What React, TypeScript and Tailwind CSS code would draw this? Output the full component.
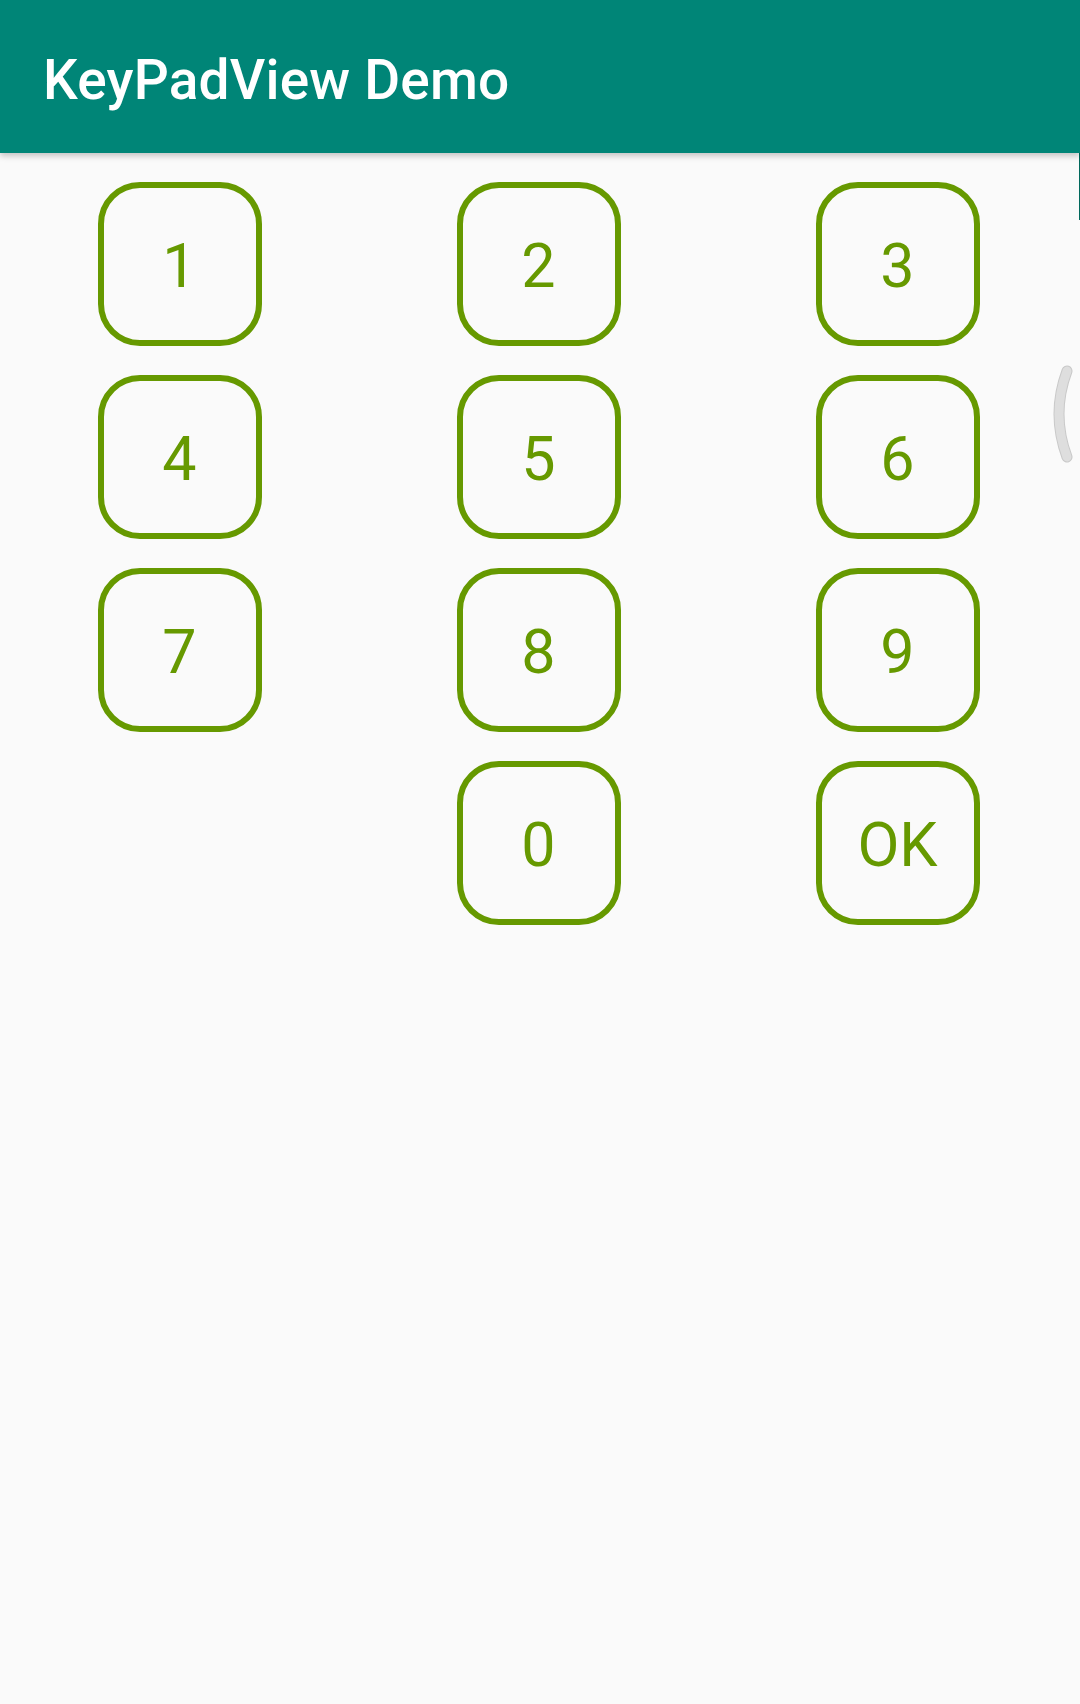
const keys = ["1", "2", "3", "4", "5", "6", "7", "8", "9", "", "0", "OK"]

function Key({ label }: { label: string }) {
    if (!label) return <div className="w-[164px] h-[164px]" />
    return (
        <div className="w-[164px] h-[164px] rounded-[42px] border-[6px] border-[#669900] flex items-center justify-center">
            <span className="text-[#669900] text-[61px] leading-none font-normal font-['Roboto'] pt-[4px]">{label}</span>
        </div>
    )
}

export default function App() {
    return (
        <div className="relative w-[1080px] h-[1704px] bg-[#fafafa] overflow-hidden font-['Roboto',sans-serif]">
            {/* toolbar */}
            <div className="relative z-10 h-[153px] bg-[#008577] flex items-center pl-[43px] shadow-[0_3px_6px_rgba(0,0,0,0.22)]">
                <div className="text-white text-[55px] font-medium tracking-[0.2px] leading-none pt-[8px]">KeyPadView Demo</div>
            </div>
            <div className="absolute right-0 top-[153px] w-px h-[67px] bg-[#00685c]" />

            {/* keypad */}
            <div className="grid grid-cols-3 pt-[29px] pr-[3px] gap-y-[29px]">
                {keys.map((k, i) => (
                    <div key={i} className="flex justify-center">
                        <Key label={k} />
                    </div>
                ))}
            </div>

            {/* edge handle */}
            <svg className="absolute left-[1046px] top-[362px]" width="30" height="106" viewBox="0 0 30 106">
                <path d="M21 9 Q5 52 21 95" fill="none" stroke="#c9c9c9" strokeWidth="11" strokeLinecap="round" />
                <path d="M21 9 Q5 52 21 95" fill="none" stroke="#dedede" strokeWidth="9" strokeLinecap="round" />
            </svg>
        </div>
    )
}
